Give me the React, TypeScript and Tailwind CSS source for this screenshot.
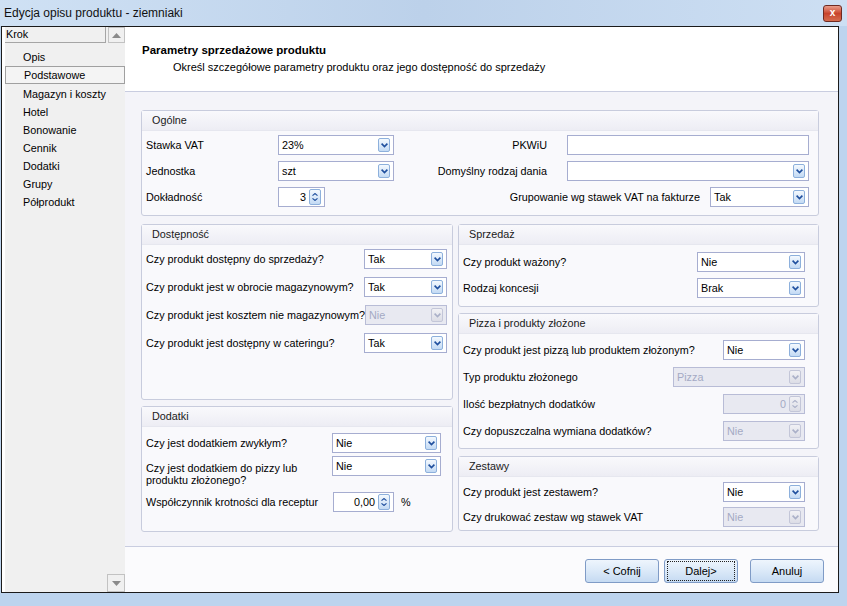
import clsx from 'clsx'

const FONT = "font-['Liberation_Sans',Arial,sans-serif]"

function Chevron({ disabled }: { disabled?: boolean }) {
  return (
    <svg width="7" height="5" viewBox="0 0 7 5">
      <path d="M0.6 0.6 L3.5 3.6 L6.4 0.6" fill="none" stroke={disabled ? '#aab0c8' : '#1f4f9e'} strokeWidth="1.6" />
    </svg>
  )
}

function DropButton({ disabled }: { disabled?: boolean }) {
  return (
    <span
      className={clsx(
        'ml-auto flex h-[14px] w-[12px] shrink-0 items-center justify-center rounded-[2px] border',
        disabled
          ? 'border-[#c3c6d8] bg-gradient-to-b from-[#f1f1f5] to-[#dcdde6]'
          : 'border-[#8db0dc] bg-gradient-to-b from-[#f4f9fe] to-[#c3daf4]'
      )}
    >
      <Chevron disabled={disabled} />
    </span>
  )
}

function Combo({ value = '', className, disabled }: { value?: string; className: string; disabled?: boolean }) {
  return (
    <div
      className={clsx(
        'flex h-[20px] shrink-0 items-center border pl-[3px] pr-[3px]',
        disabled ? 'border-[#b8bcd6] bg-[#e8e9f1] text-[#a4a9c4]' : 'border-[#a6add0] bg-white text-black',
        className
      )}
    >
      <span className="leading-none">{value}</span>
      <DropButton disabled={disabled} />
    </div>
  )
}

function Spin({ value, className, disabled }: { value: string; className: string; disabled?: boolean }) {
  return (
    <div
      className={clsx(
        'flex h-[20px] shrink-0 items-center border pl-[3px] pr-[3px]',
        disabled ? 'border-[#b8bcd6] bg-[#e8e9f1] text-[#a4a9c4]' : 'border-[#a6add0] bg-white text-black',
        className
      )}
    >
      <span className="ml-auto mr-[3px] leading-none">{value}</span>
      <span
        className={clsx(
          'flex h-[16px] w-[12px] shrink-0 flex-col items-center justify-center gap-[2px] rounded-[2px] border',
          disabled
            ? 'border-[#c3c6d8] bg-gradient-to-b from-[#f1f1f5] to-[#dcdde6]'
            : 'border-[#8db0dc] bg-gradient-to-b from-[#f4f9fe] to-[#c3daf4]'
        )}
      >
        <svg width="6" height="3" viewBox="0 0 6 3">
          <path d="M0.5 2.6 L3 0.5 L5.5 2.6" fill="none" stroke={disabled ? '#aab0c8' : '#1f4f9e'} strokeWidth="1.1" />
        </svg>
        <svg width="6" height="3" viewBox="0 0 6 3">
          <path d="M0.5 0.4 L3 2.5 L5.5 0.4" fill="none" stroke={disabled ? '#aab0c8' : '#1f4f9e'} strokeWidth="1.1" />
        </svg>
      </span>
    </div>
  )
}

function Group({ title, className, children }: { title: string; className?: string; children: React.ReactNode }) {
  return (
    <div className={clsx('flex flex-col rounded-[3px] border border-[#c8ccdd] bg-[#f9f9fc]', className)}>
      <div className="flex h-[20px] shrink-0 items-center border-b border-[#e6e7ef] bg-gradient-to-b from-[#f9f9fc] to-[#ededf4] pl-[10px] text-[#1a1a1a]">
        {title}
      </div>
      {children}
    </div>
  )
}

function Row({ label, children, className }: { label: string; children: React.ReactNode; className?: string }) {
  return (
    <div className={clsx('flex h-[20px] items-center justify-between', className)}>
      <span className="whitespace-nowrap">{label}</span>
      {children}
    </div>
  )
}

const steps = ['Opis', 'Podstawowe', 'Magazyn i koszty', 'Hotel', 'Bonowanie', 'Cennik', 'Dodatki', 'Grupy', 'Półprodukt']

export default function App() {
  return (
    <div className={clsx('flex h-[606px] w-[847px] flex-col overflow-hidden bg-[#bdd4ee] text-[10.8px] text-black', FONT)}>
      {/* title bar */}
      <div className="flex h-[26px] shrink-0 items-center bg-gradient-to-r from-[#cfe1f4] via-[#bcd1ea] to-[#cddff3] pl-[4px] pr-[5px]">
        <span className="text-[12px] text-[#111]">Edycja opisu produktu - ziemniaki</span>
        <span className="ml-auto flex h-[17px] w-[19px] items-center justify-center rounded-[3px] border border-[#6e2a22] bg-gradient-to-b from-[#e99c8a] via-[#c8432c] to-[#d56c4f] text-[10px] font-bold leading-none text-white">
          x
        </span>
      </div>

      {/* client */}
      <div className="ml-[1px] mr-[8px] flex h-[567px] shrink-0 border border-[#1b1b1b] bg-white">
        {/* steps */}
        <div className="ml-[3px] flex w-[120px] flex-col bg-[#f0f0f0]">
          <div className="flex h-[16px] shrink-0">
            <div className="flex flex-1 items-center border-b border-r border-[#a5a5a5] pl-[1px]">Krok</div>
            <div className="ml-[2px] flex w-[17px] items-center justify-center border border-[#c2c2c2]">
              <svg width="9" height="5" viewBox="0 0 9 5"><path d="M0 5 L4.5 0 L9 5 Z" fill="#8a8a8a" /></svg>
            </div>
          </div>
          <div className="mt-[5px] flex flex-col">
            {steps.map((s) => (
              <div
                key={s}
                className={clsx(
                  'flex h-[18px] items-center pl-[18px]',
                  s === 'Podstawowe' && 'h-[17px] border border-[#a0a0a0] bg-[#f4f4f4] pl-[17px] mb-[1px]'
                )}
              >
                {s}
              </div>
            ))}
          </div>
          <div className="mt-auto flex h-[18px] w-[18px] items-center justify-center self-end border border-[#c2c2c2]">
            <svg width="9" height="5" viewBox="0 0 9 5"><path d="M0 0 L4.5 5 L9 0 Z" fill="#8a8a8a" /></svg>
          </div>
        </div>

        {/* page */}
        <div className="flex flex-1 flex-col">
          <div className="flex h-[65px] shrink-0 flex-col border-b border-[#c9cde0] bg-white pl-[17px] pt-[16px]">
            <span className="text-[11.5px] font-bold leading-[14px]">Parametry sprzedażowe produktu</span>
            <span className="pl-[31px] pt-[3px] text-[11px] leading-[14px]">Określ szczegółowe parametry produktu oraz jego dostępność do sprzedaży</span>
          </div>

          <div className="flex h-[454px] shrink-0 flex-col gap-[8px] bg-[#f4f4f9] pl-[16px] pr-[19px] pt-[18px]">
            <Group title="Ogólne" className="h-[106px]">
              <div className="flex flex-col gap-[6px] pl-[4px] pr-[9px] pt-[4px]">
                <div className="flex h-[20px] items-center">
                  <span className="w-[132px]">Stawka VAT</span>
                  <Combo value="23%" className="w-[116px]" />
                  <span className="w-[153px] text-right">PKWiU</span>
                  <div className="ml-[20px] h-[20px] flex-1 border border-[#a6add0] bg-white" />
                </div>
                <div className="flex h-[20px] items-center">
                  <span className="w-[132px]">Jednostka</span>
                  <Combo value="szt" className="w-[116px]" />
                  <span className="w-[153px] text-right">Domyślny rodzaj dania</span>
                  <Combo className="ml-[20px] flex-1" />
                </div>
                <div className="flex h-[20px] items-center">
                  <span className="w-[132px]">Dokładność</span>
                  <Spin value="3" className="w-[47px]" />
                  <span className="flex-1 text-right">Grupowanie wg stawek VAT na fakturze</span>
                  <Combo value="Tak" className="ml-[10px] w-[99px]" />
                </div>
              </div>
            </Group>

            <div className="flex gap-[5px]">
              <div className="flex w-[312px] flex-col gap-[6px]">
                <Group title="Dostępność" className="h-[176px]">
                  <div className="flex flex-col gap-[8px] pl-[4px] pr-[5px] pt-[4px]">
                    <Row label="Czy produkt dostępny do sprzedaży?"><Combo value="Tak" className="w-[83px]" /></Row>
                    <Row label="Czy produkt jest w obrocie magazynowym?"><Combo value="Tak" className="w-[83px]" /></Row>
                    <Row label="Czy produkt jest kosztem nie magazynowym?"><Combo value="Nie" disabled className="w-[82px]" /></Row>
                    <Row label="Czy produkt jest dostępny w cateringu?"><Combo value="Tak" className="w-[83px]" /></Row>
                  </div>
                </Group>
                <Group title="Dodatki" className="h-[126px]">
                  <div className="flex flex-col pl-[4px] pt-[6px]">
                    <div className="flex h-[20px] items-center">
                      <span className="w-[186px]">Czy jest dodatkiem zwykłym?</span>
                      <Combo value="Nie" className="w-[109px]" />
                    </div>
                    <div className="mt-[3px] flex items-start">
                      <span className="mt-[6px] w-[186px] leading-[12px]">Czy jest dodatkiem do pizzy lub produktu złożonego?</span>
                      <Combo value="Nie" className="w-[109px]" />
                    </div>
                    <div className="mt-[6px] flex h-[20px] items-center">
                      <span className="w-[187px]">Współczynnik krotności dla receptur</span>
                      <Spin value="0,00" className="w-[61px]" />
                      <span className="ml-[7px]">%</span>
                    </div>
                  </div>
                </Group>
              </div>

              <div className="flex flex-1 flex-col">
                <Group title="Sprzedaż" className="h-[83px]">
                  <div className="flex flex-col gap-[6px] pl-[4px] pr-[13px] pt-[7px]">
                    <Row label="Czy produkt ważony?"><Combo value="Nie" className="w-[108px]" /></Row>
                    <Row label="Rodzaj koncesji"><Combo value="Brak" className="w-[108px]" /></Row>
                  </div>
                </Group>
                <Group title="Pizza i produkty złożone" className="mt-[6px] h-[136px]">
                  <div className="flex flex-col gap-[7px] pl-[4px] pr-[13px] pt-[6px]">
                    <Row label="Czy produkt jest pizzą lub produktem złożonym?"><Combo value="Nie" className="w-[82px]" /></Row>
                    <Row label="Typ produktu złożonego"><Combo value="Pizza" disabled className="w-[132px]" /></Row>
                    <Row label="Ilość bezpłatnych dodatków"><Spin value="0" disabled className="w-[82px]" /></Row>
                    <Row label="Czy dopuszczalna wymiana dodatków?"><Combo value="Nie" disabled className="w-[82px]" /></Row>
                  </div>
                </Group>
                <Group title="Zestawy" className="mt-[7px] h-[75px]">
                  <div className="flex flex-col gap-[5px] pl-[4px] pr-[13px] pt-[5px]">
                    <Row label="Czy produkt jest zestawem?"><Combo value="Nie" className="w-[82px]" /></Row>
                    <Row label="Czy drukować zestaw wg stawek VAT"><Combo value="Nie" disabled className="w-[82px]" /></Row>
                  </div>
                </Group>
              </div>
            </div>
          </div>

          {/* footer */}
          <div className="flex flex-1 items-start justify-end gap-[5px] border-t border-[#c9cde0] bg-[#fbfbfd] pr-[14px] pt-[12px]">
            {['< Cofnij', 'Dalej>', 'Anuluj'].map((b) => (
              <button
                key={b}
                className={clsx(
                  'flex h-[24px] w-[74px] items-center justify-center rounded-[3px] border border-[#7f9bc6] bg-gradient-to-b from-[#eef5fd] via-[#dbe9f8] to-[#c5daf2] text-[11px] text-black',
                  b === 'Anuluj' && 'ml-[7px]'
                )}
              >
                <span className={clsx(b === 'Dalej>' && 'flex h-[18px] w-[66px] items-center justify-center outline outline-1 outline-dotted outline-[#222]')}>{b}</span>
              </button>
            ))}
          </div>
        </div>
      </div>
    </div>
  )
}
